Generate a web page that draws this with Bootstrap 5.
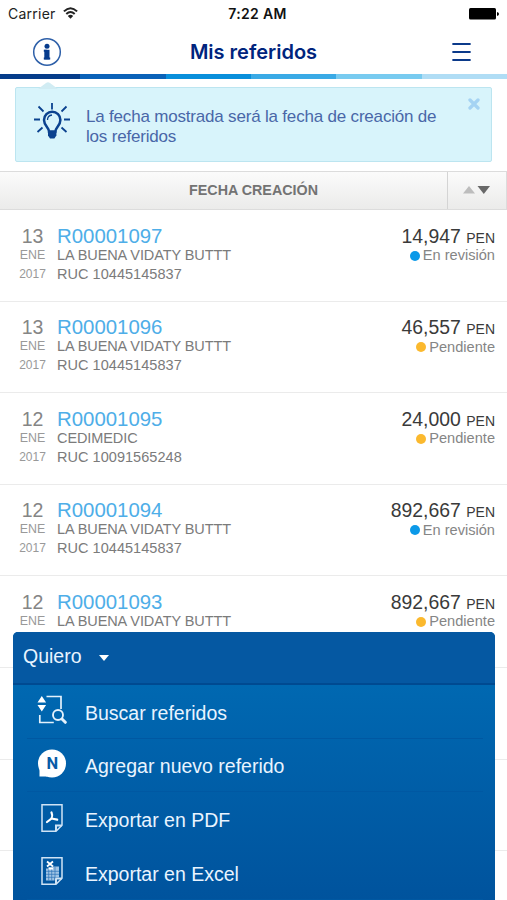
<!DOCTYPE html>
<html lang="es">
<head>
<meta charset="utf-8">
<meta name="viewport" content="width=device-width, initial-scale=1">
<title>Mis referidos</title>
<link href="https://cdn.jsdelivr.net/npm/bootstrap@5.3.0/dist/css/bootstrap.min.css" rel="stylesheet">
<style>
body{font-family:"Liberation Sans",Arial,sans-serif;line-height:1;color:#333}
.screen{height:900px;overflow:hidden}
svg{display:block;flex:none}
.status{height:28px;padding:0 8px 0 8px;font:400 14px/28px Inter,sans-serif;letter-spacing:.25px;color:#222}
.status>svg{margin-top:-1px}
.status .clock{font-weight:600;font-size:14px;letter-spacing:.35px;color:#111}
.topbar{height:46px;padding:2px 36px 0 32px}
.topbar h1{font:600 20px/44px Inter,sans-serif;letter-spacing:0;color:#00247d}
.stripes{height:5px}
.notice{margin:8px 15px 0;height:75px;background:#d8f4fb;border:1px solid #bce5f0;border-radius:2px;padding:15px 11px 0 17px}
.notice .tip{left:22px;top:-6px}
.notice p{font-size:17px;line-height:20px;color:#4967a8;margin:4px 0 0 15px;white-space:nowrap;letter-spacing:-.19px}
.notice .close-x{right:11px;top:10px}
.sortbar{margin-top:9px;height:39px;border:solid #dcdcdc;border-width:1px 0;background:linear-gradient(#fbfbfb,#ebebea);color:#737373;font-size:14.3px;font-weight:bold}
.sortbar .caption{padding-left:60px}
.sortbar .arrows{width:60px;border-left:1px solid #d4d4d4;border-right:1px solid #dcdcdc}
.sortbar .arrows svg{margin:-2px 2px 0 0}
.entry{height:91.6px;border-bottom:1.5px solid #ebebeb;padding:15.6px 12px 0 0}
.entry .date{width:57px;padding-left:8px;color:#858585}
.day{font-size:19.5px;line-height:20px}
.mon{font-size:12.4px;line-height:18px;color:#999}
.year{font-size:12px;line-height:21px;color:#999}
.code{font-size:20.4px;line-height:20px;color:#4eaee8}
.person,.ruc{font-size:14.5px;line-height:18px;color:#7b7b7b}
.person{letter-spacing:-.09px}
.ruc{line-height:21px;letter-spacing:.04px}
.amount{font-size:19.4px;line-height:20px;color:#3a3a3a}
.amount span{font-size:14px}
.state{font-size:14.6px;line-height:18px;margin-top:-1.6px;color:#858585;gap:3px}
.dot{width:10px;height:10px;border-radius:50%;background:#fbb92e;margin-top:1px}
.dot.review{background:#0b99e8}
.sheet{left:13px;right:12px;top:632px;bottom:0;border-radius:5px 5px 0 0;background:linear-gradient(#0068b1 20%,#00539d);color:#e9f4ff;overflow:hidden}
.sheet-head{height:53px;background:#0558a2;border-bottom:2px solid #004a91;padding:0 10px;font-size:19.5px;gap:17px}
.sheet-head span{margin-top:-2px}
.action{height:53.7px;margin-left:14px;margin-right:12px;padding-left:10px;font-size:19.5px;border-bottom:1px solid #0058a2}
.action svg{margin-right:18px;margin-top:-2px}
.action span{padding-top:4px}
</style>
<script src="https://cdn.jsdelivr.net/npm/bootstrap@5.3.0/dist/js/bootstrap.bundle.min.js"></script>
</head>
<body class="bg-white">
<div class="screen position-relative">
  <div class="status d-flex justify-content-between align-items-center position-relative">
    <div class="d-flex align-items-center gap-2"><span>Carrier</span>
      <svg width="15" height="12" viewBox="0 0 15 12" fill="none" stroke="#222" stroke-width="2" style="margin:-2px 0 0 -1px"><path d="M.9 4.4Q7.500-2 14.100 4.400M3.300 7Q7.500 3 11.700 7"/><path d="M7.500 11.800 4.800 9Q7.500 6.700 10.200 9Z" fill="#222" stroke="none"/></svg>
    </div>
    <span class="clock position-absolute start-50 translate-middle-x text-nowrap ms-1">7:22 AM</span>
    <svg width="30" height="12" viewBox="0 0 30 12"><rect width="27" height="11.500" rx="1.500"/><path d="M28 4q2 .4 2 2t-2 2z"/></svg>
  </div>
  <header class="topbar d-flex justify-content-between align-items-center position-relative">
    <svg width="30" height="30" viewBox="0 0 30 30"><circle cx="15" cy="15" r="13.300" fill="none" stroke="#2d5fa8" stroke-width="1.500"/><circle cx="15" cy="9.300" r="2.500" fill="#073b8c"/><path d="M12.300 12.800h5.200v9.600h-5.200z" fill="#073b8c"/><path d="M11.800 12.800h3v2h-3zM11.800 20.600h6.400v2h-6.400z" fill="#073b8c"/></svg>
    <h1 class="m-0 position-absolute start-50 translate-middle-x text-nowrap">Mis referidos</h1>
    <svg width="19" height="20" viewBox="0 0 19 20" stroke="#0b3a8a" stroke-width="2" stroke-linecap="round"><path d="M1.100 1.900h16.800M1.100 10h16.800M1.100 18h16.800"/></svg>
  </header>
  <svg class="stripes" width="507" height="5" viewBox="0 0 507 5"><path fill="#053c8a" d="M0 0h80v5H0z"/><path fill="#0a62b8" d="M80 0h86v5H80z"/><path fill="#098fdb" d="M166 0h85v5h-85z"/><path fill="#3aaae6" d="M251 0h85v5h-85z"/><path fill="#78cbf0" d="M336 0h86v5h-86z"/><path fill="#b0ddf5" d="M422 0h85v5h-85z"/></svg>
  <div class="notice d-flex align-items-start position-relative">
    <svg class="tip position-absolute" width="20" height="7" viewBox="0 0 20 7"><path d="M0 7 8 1q2-1.400 4 0l8 6z" fill="#d1ecf3"/></svg>
    <svg width="38" height="37" viewBox="0 0 38 37" fill="none" stroke="#0b428f" stroke-width="1.800"><path d="M19 0v6.500M5.500 3.500l5 5M33.500 3.500l-5 5M1 16.500h6M31 16.500h6M4.500 29l5-4.500M33.500 29l-5-4.500"/><path d="M16 28.500c0-4-5-6-5-11.500a8.200 8.200 0 0 1 16.400 0c0 5.500-5 7.500-5 11.500z" stroke-width="2.500"/><path d="M14.500 17q0-4.500 4.500-5" stroke-width="1.300"/><path d="M15 28h8.400v4.500l-2 3h-4.400l-2-3z" fill="#0b428f" stroke="none"/></svg>
    <p>La fecha mostrada será la fecha de creación de<br>los referidos</p>
    <svg class="close-x position-absolute" width="12" height="12" viewBox="0 0 12 12" stroke="#a5d3f3" stroke-width="3.300" stroke-linecap="round"><path d="m2 2 8 8M10 2l-8 8"/></svg>
  </div>
  <div class="sortbar d-flex">
    <div class="caption flex-grow-1 d-flex align-items-center justify-content-center">FECHA CREACIÓN</div>
    <div class="arrows d-flex align-items-center justify-content-center">
      <svg width="27" height="8" viewBox="0 0 27 8"><path d="M0 7.500h12L6 0z" fill="#bdbdbd"/><path d="M14.500 0H27l-6.200 8z" fill="#686868"/></svg>
    </div>
  </div>
  <main id="entries"></main>

  <section class="sheet position-absolute">
    <div class="sheet-head d-flex align-items-center"><span>Quiero</span>
      <svg width="10" height="6" viewBox="0 0 10 6"><path d="M0 0h10L5 6z" fill="#fff"/></svg></div>
    <div class="action d-flex align-items-center">
      <svg width="30" height="30" viewBox="0 0 30 30" fill="none" stroke="#e4f1fc" stroke-width="1.700"><path d="M9.500 1.500H24V14M2.800 20v7.500h14"/><path d="m.5 7.500 4.300-6.500 4.300 6.500zM.5 10l4.300 6.500L9.100 10z" fill="#fff" stroke="none"/><circle cx="21" cy="20" r="5" stroke-width="1.900"/><path d="m25 24 3.300 3.300" stroke-width="3" stroke-linecap="round"/></svg>
      <span>Buscar referidos</span></div>
    <div class="action d-flex align-items-center">
      <svg width="30" height="30" viewBox="0 0 30 30"><path d="M2.500 27.500V20l8 7.500z" fill="#fff"/><circle cx="15" cy="14.500" r="14" fill="#fff"/><text x="15.300" y="19.700" text-anchor="middle" font-family="Roboto,sans-serif" font-weight="700" font-size="16.500" fill="#075ba7">N</text></svg>
      <span>Agregar nuevo referido</span></div>
    <div class="action d-flex align-items-center">
      <svg width="30" height="30" viewBox="0 0 30 30" fill="none" stroke="#cfe3f5" stroke-width="1.500"><path d="M5 1.800h20v20.500l-6 6H5z"/><path d="M19 28v-5.500h6" stroke-width="2"/><path d="M14.500 9.500q1.500 3 0 6l-4.500 3.500M14.500 15.500l5.700 1.200" stroke="#fff" stroke-width="2.200" stroke-linecap="round"/></svg>
      <span>Exportar en PDF</span></div>
    <div class="action d-flex align-items-center">
      <svg width="30" height="30" viewBox="0 0 30 30" fill="none" stroke="#cfe3f5" stroke-width="1.500"><path d="M5 1.800h20v20.500l-6 6H5z"/><path d="M19 28v-5.500h6" stroke-width="2"/><path d="M10 5.500l6 5M16 5.500l-6 5" stroke="#fff" stroke-width="1.800"/><path d="M9 12.500h7v-2h6v11h-4.500v3H9z" fill="#9fc3e4" stroke="none"/><path d="M9 15.300h13M9 18.300h13M9 21.300h9M11.700 12v12.500M14.700 12v12.500M18 10.500v12" stroke="#2d74b7" stroke-width=".7"/><path d="M11.500 11.300h4.500v2.200h-4.500z" fill="#fff" stroke="none"/></svg>
      <span>Exportar en Excel</span></div>
  </section>
</div>
<script>
const P = 'LA BUENA VIDATY BUTTT', R = '10445145837';
const rows = [
  [13, 'R00001097', P, R, '14,947', 1],
  [13, 'R00001096', P, R, '46,557', 0],
  [12, 'R00001095', 'CEDIMEDIC', '10091565248', '24,000', 0],
  [12, 'R00001094', P, R, '892,667', 1],
  [12, 'R00001093', P, '', '892,667', 0]
];
document.getElementById('entries').innerHTML = rows.map(([d, c, n, r, a, s]) => `
<div class="entry d-flex">
  <div class="date text-center flex-shrink-0"><div class="day">${d}</div><div class="mon">ENE</div>${r ? '<div class="year">2017</div>' : ''}</div>
  <div class="flex-grow-1"><div class="code">${c}</div><div class="person">${n}</div>${r ? `<div class="ruc">RUC ${r}</div>` : ''}</div>
  <div class="text-end"><div class="amount">${a} <span>PEN</span></div>
  <div class="state d-flex align-items-center justify-content-end"><i class="dot ${s ? 'review' : ''}"></i>${s ? 'En revisión' : 'Pendiente'}</div></div>
</div>`).join('') + '<div class="entry"></div><div class="entry"></div>';
</script>
</body>
</html>
